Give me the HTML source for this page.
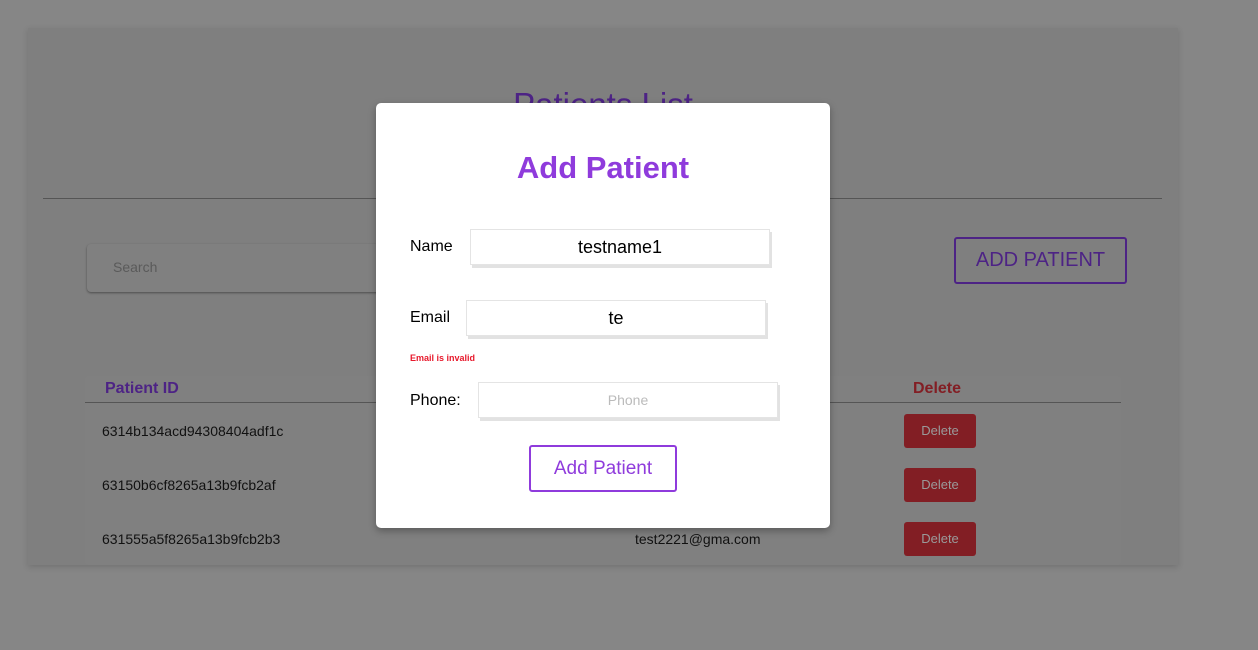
<!DOCTYPE html>
<html><head><meta charset="utf-8"><style>
*{box-sizing:border-box;margin:0;padding:0}
body{width:1258px;height:650px;background:#868686;font-family:"Liberation Sans",sans-serif;position:relative;overflow:hidden}
.a{position:absolute}
.card{left:28px;top:28px;width:1150px;height:537px;background:#7f7f7f;box-shadow:0 2px 6px rgba(0,0,0,.15)}
.title{left:0;width:1206px;top:86px;text-align:center;font-size:33px;color:#4d2385}
.hr{left:43px;top:198px;width:1119px;height:1px;background:#555}
.search{left:87px;top:244px;width:300px;height:48px;background:#808080;border-radius:4px;box-shadow:0 1px 2px rgba(0,0,0,.4);font-size:14px;color:#5a5a5a;padding:15px 26px}
.addbtn{left:954px;top:237px;width:173px;height:47px;border:2px solid #4d2385;border-radius:3px;color:#4d2385;font-size:20px;text-align:center;line-height:43px}
.table{left:85px;top:376px;width:1036px;height:189px;background:#808080;border-radius:4px}
.th{top:380px;font-size:16px;font-weight:bold}
.thline{left:85px;top:402px;width:1036px;height:1px;background:#555}
.td{font-size:14px;color:#111}
.del{left:904px;width:72px;height:34px;background:#821e24;border-radius:3px;color:#9a9a9a;font-size:13px;text-align:center;line-height:34px}
.modal{left:376px;top:103px;width:454px;height:425px;background:#fff;border-radius:5px;box-shadow:0 3px 8px rgba(0,0,0,.3)}
.mt{left:376px;width:454px;top:150px;text-align:center;font-size:31px;font-weight:bold;color:#8f3bdc}
.lbl{font-size:16px;color:#000}
.inp{width:300px;height:36px;border:1px solid #e4e4e4;box-shadow:2px 3px 0 #e2e2e2;text-align:center;font-size:18px;line-height:34px;color:#000}
.err{left:410px;top:353px;font-size:9px;font-weight:bold;color:#e8192c}
.sub{left:529px;top:445px;width:148px;height:47px;border:2px solid #8f3bdc;border-radius:3px;color:#8f3bdc;font-size:19px;text-align:center;line-height:43px}
</style></head><body>
<div class="a card"></div>
<div class="a title">Patients List</div>
<div class="a hr"></div>
<div class="a search">Search</div>
<div class="a addbtn">ADD PATIENT</div>
<div class="a table"></div>
<div class="a th" style="left:105px;color:#4d2385">Patient ID</div>
<div class="a th" style="left:913px;color:#821e24">Delete</div>
<div class="a thline"></div>
<div class="a td" style="left:102px;top:423px">6314b134acd94308404adf1c</div>
<div class="a td" style="left:102px;top:477px">63150b6cf8265a13b9fcb2af</div>
<div class="a td" style="left:102px;top:531px">631555a5f8265a13b9fcb2b3</div>
<div class="a td" style="left:635px;top:531px">test2221@gma.com</div>
<div class="a del" style="top:414px">Delete</div>
<div class="a del" style="top:468px">Delete</div>
<div class="a del" style="top:522px">Delete</div>

<div class="a modal"></div>
<div class="a mt">Add Patient</div>
<div class="a lbl" style="left:410px;top:238px">Name</div>
<div class="a inp" style="left:470px;top:229px">testname1</div>
<div class="a lbl" style="left:410px;top:309px">Email</div>
<div class="a inp" style="left:466px;top:300px">te</div>
<div class="a err">Email is invalid</div>
<div class="a lbl" style="left:410px;top:392px">Phone:</div>
<div class="a inp" style="left:478px;top:382px;font-size:14px;color:#bbb">Phone</div>
<div class="a sub">Add Patient</div>
</body></html>
